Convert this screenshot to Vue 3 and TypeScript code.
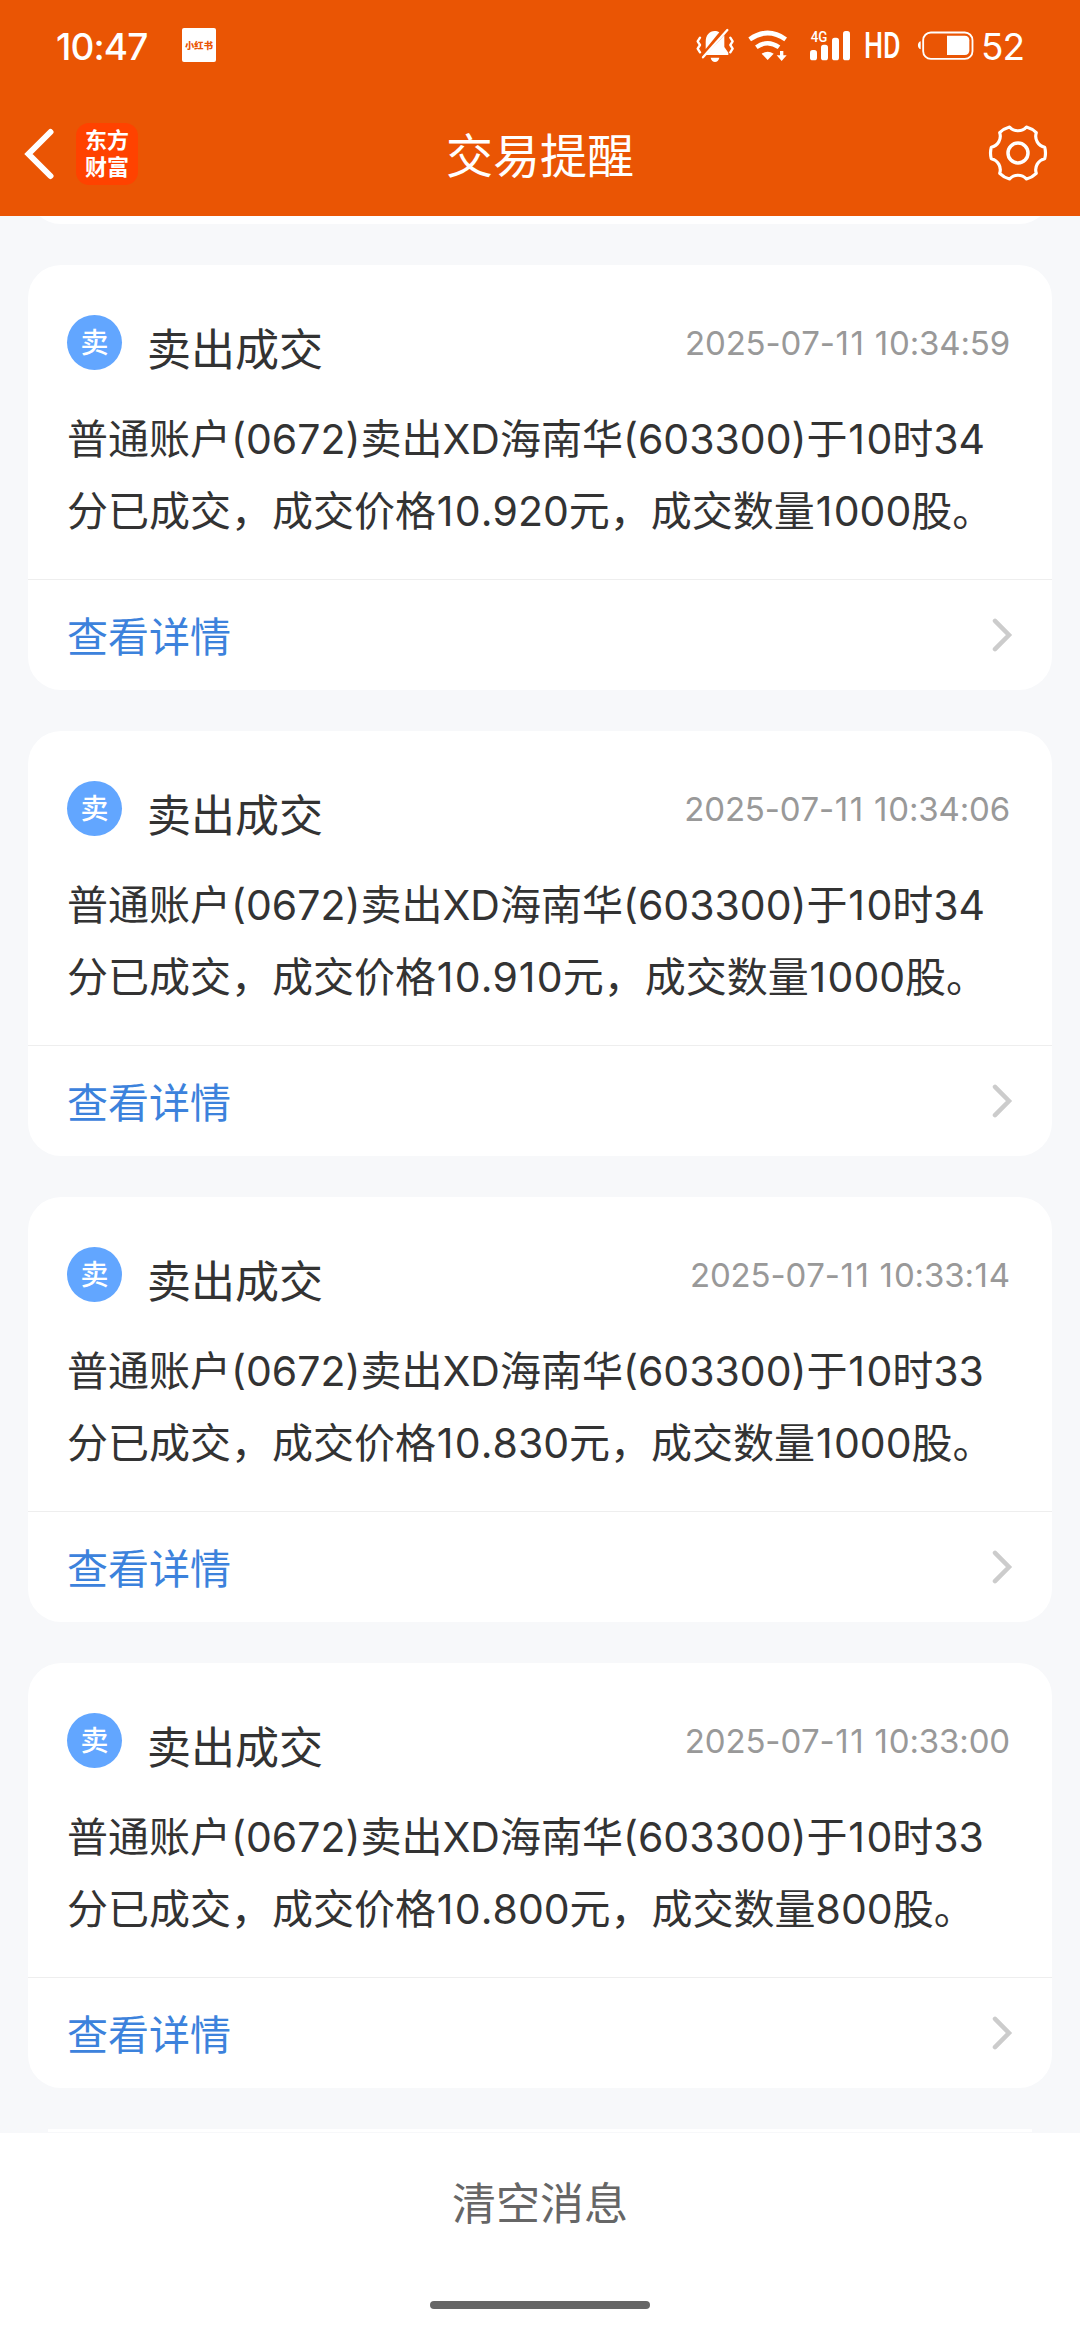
<script setup lang="ts">
interface Notice {
  id: number
  time: string
  lines: string[]
}

const notices: Notice[] = [
  {
    id: 1,
    time: '2025-07-11 10:34:59',
    lines: ['普通账户(0672)卖出XD海南华(603300)于10时34', '分已成交，成交价格10.920元，成交数量1000股。'],
  },
  {
    id: 2,
    time: '2025-07-11 10:34:06',
    lines: ['普通账户(0672)卖出XD海南华(603300)于10时34', '分已成交，成交价格10.910元，成交数量1000股。'],
  },
  {
    id: 3,
    time: '2025-07-11 10:33:14',
    lines: ['普通账户(0672)卖出XD海南华(603300)于10时33', '分已成交，成交价格10.830元，成交数量1000股。'],
  },
  {
    id: 4,
    time: '2025-07-11 10:33:00',
    lines: ['普通账户(0672)卖出XD海南华(603300)于10时33', '分已成交，成交价格10.800元，成交数量800股。'],
  },
]

// The digit 1 is set slightly wider than the typeface's own advance.
const split = (s: string): string[] => s.split(/(1)/).filter((p) => p !== '')

// Six-tooth gear outline: short flat teeth joined by concave arcs.
function gearPath(cx: number, cy: number, r: number, half: number, arc: number): string {
  const at = (deg: number): string => {
    const a = (deg * Math.PI) / 180
    return `${(cx + r * Math.cos(a)).toFixed(2)} ${(cy + r * Math.sin(a)).toFixed(2)}`
  }
  let d = `M${at(-half)}`
  for (let k = 0; k < 6; k++) {
    const mid = k * 60
    d += ` A${r * 0.8} ${r * 0.8} 0 0 1 ${at(mid + half)}`
    d += ` A${arc} ${arc} 0 0 0 ${at(mid + 60 - half)}`
  }
  return d + 'Z'
}
const gear = gearPath(90, 90, 82, 12, 34)
</script>

<template>
  <div class="screen">
    <header class="top">
      <div class="status">
        <span class="clock">10:47</span>
        <span class="xhs">小红书</span>
        <span class="grow"></span>
        <svg class="i-bell" width="38" height="36" viewBox="48 81 114 108" fill="#fff">
          <path d="M77 147 V126 C77 105 88 93 104 93 C109 93 114 94 118 97 Z" />
          <path d="M133 106 V141 L145 158 V165 H77 Z" />
          <path d="M92 173 H118 C116 182 111 186 105 186 C99 186 94 182 92 173Z" />
          <path d="M142 90 L69 172" stroke="#fff" stroke-width="7" stroke-linecap="round" />
          <path d="M60 113 L53 124 L60 135 L53 146 L60 157 M151 113 L158 124 L151 135 L158 146 L151 157" fill="none" stroke="#fff" stroke-width="7" stroke-linecap="round" stroke-linejoin="round" />
        </svg>
        <svg class="i-wifi" width="40" height="36" viewBox="204 81 120 108" fill="none" stroke="#fff">
          <path d="M209 118 Q263 80 317 118" stroke-width="14" />
          <path d="M229 142 Q263 117 297 142" stroke-width="13" />
          <path d="M245 161 Q263 149 281 161 L263 180Z" fill="#fff" stroke="none" />
          <path d="M300 153 H310 V166 H320 L305 183 L290 166 H300Z" fill="#fff" stroke="none" />
        </svg>
        <svg class="i-signal" width="42" height="36" viewBox="387 81 126 108" fill="#fff">
          <text x="392" y="126" font-size="43" font-weight="500" textLength="50" lengthAdjust="spacingAndGlyphs" class="net">4G</text>
          <rect x="390" y="150" width="21" height="31" rx="8" />
          <rect x="423" y="134" width="21" height="47" rx="8" />
          <rect x="456" y="113" width="21" height="68" rx="8" />
          <rect x="489" y="93" width="21" height="88" rx="8" />
        </svg>
        <span class="hd">HD</span>
        <svg class="i-batt" width="57" height="36" viewBox="711 81 171 108" fill="#fff">
          <path d="M722 124 V148 C711 145 711 127 722 124Z" />
          <rect x="729.500" y="97.500" width="148" height="79" rx="23" fill="none" stroke="#fff" stroke-width="5.500" />
          <path d="M801 107 H854 Q868 107 868 121 V151 Q868 165 854 165 H801Z" />
        </svg>
        <span class="pct">52</span>
      </div>
      <div class="nav">
        <div class="side">
          <svg class="back" width="30" height="54" viewBox="0 0 30 54" fill="none" stroke="#fff" stroke-width="6" stroke-linecap="round">
            <path d="M26.500 5 L4.500 27 L26.500 49" stroke-linejoin="miter" />
          </svg>
          <div class="logo"><span>东方</span><span>财富</span></div>
        </div>
        <h1>交易提醒</h1>
        <div class="side right">
          <svg width="60" height="60" viewBox="0 0 180 180" fill="none" stroke="#fff">
            <path :d="gear" stroke-width="9.500" stroke-linejoin="round" />
            <circle cx="90" cy="90" r="30" stroke-width="10.500" />
          </svg>
        </div>
      </div>
    </header>

    <main class="list">
      <div class="peek-top"></div>
      <article v-for="n in notices" :key="n.id" class="card">
        <div class="head">
          <span class="badge">卖</span>
          <span class="title">卖出成交</span>
          <time><span v-for="(p, i) in split(n.time)" :key="i" :class="{ one: p === '1' }">{{ p }}</span></time>
        </div>
        <div class="body">
          <div v-for="line in n.lines" :key="line"><span v-for="(p, i) in split(line)" :key="i" :class="{ one: p === '1' }">{{ p }}</span></div>
        </div>
        <div class="more">
          <span>查看详情</span>
          <svg width="22" height="34" viewBox="0 0 22 34" fill="none" stroke="#ccc" stroke-width="4.500" stroke-linecap="round">
            <path d="M4 2.800 L18 17 L4 31.200" />
          </svg>
        </div>
      </article>
      <div class="peek-bottom"></div>
    </main>

    <footer class="foot">
      <span class="clear">清空消息</span>
      <span class="home"></span>
    </footer>
  </div>
</template>

<style>
body {
  margin: 0;
  overflow: hidden;
}
</style>

<style scoped>
.screen {
  width: 1080px;
  height: 2340px;
  display: flex;
  flex-direction: column;
  background: #f7f8fa;
  font-family: Inter, "Noto Sans CJK SC", sans-serif;
  font-kerning: none;
  color: #333;
  overflow: hidden;
}
.top {
  height: 216px;
  flex: none;
  background: #ea5504;
  color: #fff;
}
.status {
  height: 36px;
  padding: 27px 54px 0 56px;
  display: flex;
  align-items: flex-start;
}
.status svg {
  flex: none;
}
.clock {
  width: 126px;
  font-size: 37px;
  line-height: 39px;
  font-weight: 500;
  letter-spacing: -0.9px;
}
.xhs {
  width: 34px;
  height: 34px;
  margin-top: 1px;
  border-radius: 2px;
  background: #fff;
  color: #ea5504;
  font: 900 9.3px/34px "Noto Sans CJK SC", sans-serif;
  text-align: center;
  white-space: nowrap;
}
.grow {
  flex: 1;
}
.i-wifi {
  margin-left: 14px;
}
.i-signal {
  margin-left: 21px;
}
.net {
  font-family: Roboto, sans-serif;
}
.hd {
  width: 50px;
  margin: 0 -14px 0 13px;
  font: 500 36.5px/37px Roboto, sans-serif;
  transform: scaleX(0.735);
  transform-origin: left center;
}
.i-batt {
  margin-left: 17px;
}
.pct {
  width: 45px;
  margin-left: 7px;
  font-size: 37px;
  line-height: 39px;
  letter-spacing: -1px;
  white-space: nowrap;
}
.nav {
  height: 62px;
  margin-top: 60px;
  display: flex;
  align-items: center;
}
.side {
  width: 240px;
  display: flex;
  align-items: center;
  padding-left: 24px;
  box-sizing: border-box;
}
.side.right {
  justify-content: flex-end;
  padding: 0 32px 3px 0;
}
.logo {
  width: 62px;
  height: 62px;
  margin-left: 22px;
  padding-top: 4px;
  box-sizing: border-box;
  border-radius: 13px;
  background: #ff4200;
  display: flex;
  flex-direction: column;
  align-items: center;
  font: 700 22px/27px Inter, "Noto Sans CJK SC", sans-serif;
}
h1 {
  flex: 1;
  margin: 4px 0 0;
  font-size: 47px;
  line-height: 62px;
  font-weight: 400;
  text-align: center;
}
.list {
  height: 1917px;
  flex: none;
  display: flex;
  flex-direction: column;
  align-items: center;
  gap: 41px;
  overflow: hidden;
}
.peek-top {
  width: 1024px;
  height: 80px;
  margin-top: -72px;
  flex: none;
  border-radius: 33px;
  background: #fff;
}
.card {
  width: 1024px;
  height: 425px;
  flex: none;
  border-radius: 33px;
  background: #fff;
}
.peek-bottom {
  width: 1024px;
  height: 3px;
  flex: none;
  background: #fff;
  clip-path: inset(0 20px 0 20px);
}
.head {
  height: 55px;
  padding: 50px 42px 0 39px;
  display: flex;
}
.badge {
  width: 55px;
  height: 55px;
  border-radius: 50%;
  background: #62a6ff;
  color: #fff;
  font-size: 28px;
  font-weight: 500;
  line-height: 56px;
  text-align: center;
}
.title {
  flex: 1;
  margin: 8px 0 0 25px;
  font-size: 44px;
  line-height: 55px;
}
time {
  font-size: 33px;
  line-height: 57px;
  letter-spacing: -0.15px;
  color: #999;
  white-space: nowrap;
}
.one {
  padding: 0 0.033em 0 0.02em;
}
.body {
  height: 176px;
  margin-top: 33px;
  padding-left: 39px;
  font-size: 41px;
  line-height: 72px;
  white-space: nowrap;
}
.more {
  height: 111px;
  border-top: 1px solid #eee;
  box-sizing: border-box;
  padding: 0 39px 0 39px;
  display: flex;
  justify-content: space-between;
  align-items: center;
  font-size: 41px;
  color: #3c82dc;
}
.more span {
  margin-top: -2px;
}
.foot {
  flex: 1;
  display: flex;
  flex-direction: column;
  align-items: center;
  background: #fff;
  color: #666;
}
.clear {
  font-size: 44px;
  line-height: 142px;
}
.home {
  width: 220px;
  height: 8px;
  margin-top: 26px;
  border-radius: 4px;
  background: #666;
}
</style>
